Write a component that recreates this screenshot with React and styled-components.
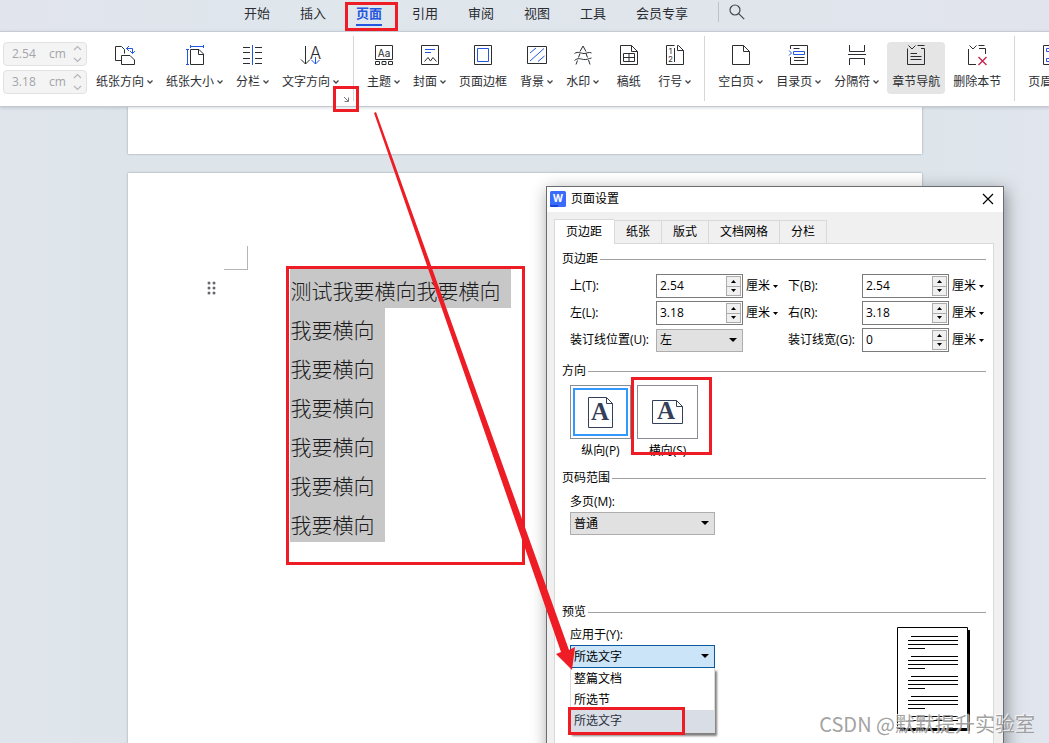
import React from "react";
import styled, { createGlobalStyle, css } from "styled-components";

const INK = "#2b2d31";
const BLUE = "#2457e0";
const RED = "#ee1c24";

const GlobalStyle = createGlobalStyle`
  *, *::before, *::after { box-sizing: border-box; }
  html, body, #root { height: 100%; }
  body {
    margin: 0;
    font-family: "Open Sans", "Noto Sans CJK SC", sans-serif;
    font-size: 12px;
    line-height: 16px;
    color: #111;
  }
  button, input, select { font: inherit; color: inherit; margin: 0; padding: 0; }
  button { border: 0; background: none; white-space: nowrap; }
  svg { display: block; flex: none; }
`;

const Screen = styled.div`
  position: relative;
  height: 100%;
  overflow: hidden;
  display: flex;
  flex-direction: column;
  background: linear-gradient(90deg, #e0e5ec, #dde5ea 12%, #dde5ea 88%, #e1e5ee);
`;

/* Red rectangle drawn round the part that contains it */
const Mark = styled.span`
  position: absolute;
  inset: ${(p) => p.$inset};
  border: 3px solid ${RED};
  pointer-events: none;
  z-index: 2;
`;

/* ---------- menu tabs ---------- */

const MenuBar = styled.nav`
  display: flex;
  align-items: stretch;
  gap: 30px;
  height: 31px;
  flex: none;
  padding-left: 244px;
  background: linear-gradient(90deg, #e1e4ed, #dfe6ec 30%, #e0e5ec 70%, #e1e4ed);
`;

const MenuTab = styled.button`
  position: relative;
  height: 26px;
  font-size: 13px;
  line-height: 26px;
  color: ${INK};
  ${(p) =>
    p.$active &&
    css`
      color: ${BLUE};
      font-weight: 700;
      border-bottom: 2px solid ${BLUE};
    `}
`;

const SearchBox = styled.button`
  display: flex;
  align-items: center;
  height: 20px;
  margin-top: 2px;
  padding-left: 10px;
  border-left: 1px solid #bcc2cb;
`;

/* ---------- ribbon ---------- */

const Ribbon = styled.div`
  display: flex;
  flex: none;
  height: 76px;
  position: relative;
  z-index: 1;
  background: #fff;
  border-top: 1px solid #c6ccd5;
  border-bottom: 1px solid #c4c8cf;
  box-shadow: 0 1px 3px rgba(60, 70, 90, 0.2);
`;

const Group = styled.div`
  position: relative;
  flex: none;
  display: flex;
  gap: 3px;
  padding: 10px 8px 0;
  &:first-child { padding: 10px 9px 0 3px; }
  &:not(:last-child)::after {
    content: "";
    position: absolute;
    right: -1px;
    top: 4px;
    bottom: 5px;
    width: 1px;
    background: #d5d6d9;
  }
  & + & { margin-left: 1px; }
`;

const MarginStack = styled.div`
  display: flex;
  flex-direction: column;
  gap: 4px;
  margin-right: 1px;
`;

const MarginBox = styled.label`
  display: flex;
  align-items: center;
  width: 84px;
  height: 24px;
  padding: 0 4px 0 8px;
  border: 1px solid #e2e2e2;
  border-radius: 4px;
  background: #f4f4f4;
  color: #a3a5a9;
  input {
    width: 37px;
    border: 0;
    background: none;
    outline: 0;
  }
  span { flex: 1; }
`;

const Tool = styled.button`
  display: flex;
  flex-direction: column;
  align-items: center;
  height: 52px;
  min-width: 43px;
  padding: 2px 5px 0;
  gap: 8px;
  border-radius: 4px;
  color: ${INK};
  background: ${(p) => (p.$on ? "#e5e5e5" : "transparent")};
`;

const ToolLabel = styled.span`
  display: flex;
  align-items: center;
  gap: 3px;
`;

const Launcher = styled.button`
  position: absolute;
  right: 2px;
  bottom: 2px;
  width: 10px;
  height: 10px;
`;

/* ---------- document ---------- */

const Workspace = styled.main`
  flex: 1;
  min-height: 0;
  display: flex;
  flex-direction: column;
  align-items: center;
  gap: 19px;
`;

const Paper = styled.section`
  width: 794px;
  max-width: 100%;
  flex: none;
  background: #fff;
  box-shadow: 0 0 2px rgba(70, 80, 100, 0.5);
`;

const PaperEnd = styled(Paper)`
  height: 47px;
`;

const PaperBody = styled(Paper)`
  display: flex;
  align-items: flex-start;
  min-height: 1123px;
  padding: 73px 96px 96px;
`;

const Gutter = styled.div`
  width: 66px;
  display: flex;
  flex-direction: column;
  gap: 10px;
`;

const CropCorner = styled.div`
  width: 24px;
  height: 24px;
  border-right: 1px solid #b5b5b5;
  border-bottom: 1px solid #b5b5b5;
`;

const Handle = styled.button`
  width: 10px;
  margin-left: -17px;
`;

const Lines = styled.div`
  position: relative;
  display: flex;
  flex-direction: column;
  align-items: flex-start;
  margin-top: 23px;
`;

const Line = styled.p`
  margin: 0;
  padding: 6px 10px 2px 1px;
  background: #c7c7c7;
  color: #1c1c1c;
  font-family: "Noto Sans CJK SC", sans-serif;
  font-size: 21px;
  font-weight: 300;
  line-height: 31px;
`;

/* ---------- dialog ---------- */

const Dialog = styled.div`
  position: absolute;
  z-index: 3;
  left: 546px;
  top: 186px;
  width: 458px;
  padding-bottom: 48px;
  background: #f0f0f0;
  border: 1px solid #6a6c6f;
  box-shadow: 2px 4px 16px rgba(0, 0, 0, 0.4);
  color: #000;
`;

const TitleBar = styled.header`
  display: flex;
  align-items: center;
  gap: 5px;
  height: 25px;
  padding: 0 9px 2px 3px;
  background: #fff;
  h1 {
    flex: 1;
    margin: 0;
    font-size: 12px;
    font-weight: 400;
  }
`;

const DialogTabs = styled.div`
  display: flex;
  align-items: flex-end;
  padding: 7px 7px 0;
`;

const DialogTab = styled.button`
  height: 23px;
  padding: 0 11px;
  border: 1px solid #d9d9d9;
  border-width: 1px 0 0 1px;
  background: #f0f0f0;
  &:last-child { border-right-width: 1px; }
  ${(p) =>
    p.$active &&
    css`
      position: relative;
      height: 25px;
      margin-bottom: -1px;
      padding: 0 12px 1px 11px;
      background: #fff;
    `}
`;

const Panel = styled.div`
  display: flex;
  flex-direction: column;
  margin: 0 9px 0 7px;
  padding: 7px 7px 9px;
  border: 1px solid #d9d9d9;
  background: #fff;
`;

const Section = styled.section`
  height: ${(p) => p.$height}px;
`;

const SectionTitle = styled.h2`
  display: flex;
  align-items: center;
  gap: 2px;
  margin: 0;
  font-size: 12px;
  font-weight: 400;
  &::after {
    content: "";
    flex: 1;
    height: 1px;
    background: #a0a0a0;
  }
`;

const MarginGrid = styled.div`
  display: grid;
  grid-template-columns: 86px 87px 45px 74px 87px 1fr;
  grid-auto-rows: 24px;
  gap: 3px 0;
  align-items: center;
  padding: 7px 0 0 8px;
  white-space: nowrap;
`;

const Spin = styled.span`
  display: flex;
  height: 24px;
  padding: 1px 1px 1px 3px;
  border: 1px solid #7a7a7a;
  background: #fff;
  input {
    flex: 1;
    min-width: 0;
    border: 0;
    outline: 0;
  }
`;

const SpinButtons = styled.span`
  display: flex;
  flex-direction: column;
  width: 15px;
  button {
    flex: 1;
    display: flex;
    align-items: center;
    justify-content: center;
    border: 1px solid #acacac;
    background: #f0f0f0;
  }
  button + button { border-top: 0; }
`;

const Unit = styled.button`
  display: flex;
  align-items: center;
  gap: 3px;
  padding-left: 3px;
`;

const Picker = styled.span`
  position: relative;
  display: block;
  width: ${(p) => p.$width}px;
  select {
    display: block;
    width: 100%;
    height: 23px;
    padding: 0 20px 0 3px;
    appearance: none;
    border: 1px solid ${(p) => (p.$open ? "#0a5aa0" : "#adadad")};
    border-radius: 0;
    background: ${(p) => (p.$open ? "#cce4f7" : "#e1e1e1")};
    outline: 0;
  }
  > svg {
    position: absolute;
    right: 6px;
    top: 9px;
    pointer-events: none;
  }
`;

const Orientations = styled.div`
  display: flex;
  gap: 6px;
  padding: 6px 0 0 8px;
`;

const Orientation = styled.label`
  position: relative;
  display: flex;
  flex-direction: column;
  align-items: center;
  gap: 4px;
  width: 61px;
  input {
    position: absolute;
    opacity: 0;
    margin: 0;
  }
`;

const OrientationFrame = styled.span`
  display: flex;
  width: 100%;
  height: 54px;
  padding: 2px;
  border: 1px solid #8a8d92;
  > span {
    flex: 1;
    display: flex;
    align-items: center;
    justify-content: center;
    border: 2px solid ${(p) => (p.$selected ? "#3399ff" : "transparent")};
  }
`;

const Field = styled.div`
  position: relative;
  padding: ${(p) => p.$top}px 0 0 8px;
  label { display: block; margin-bottom: 2px; }
`;

const Preview = styled.div`
  display: flex;
  justify-content: space-between;
  padding-right: 16px;
`;

const PreviewSheet = styled.div`
  margin-top: 7px;
`;

const Options = styled.ul`
  position: absolute;
  z-index: 1;
  top: 100%;
  left: 8px;
  width: 145px;
  margin: 0;
  padding: 0;
  list-style: none;
  background: #fff;
  border: 1px solid #dcdcdc;
  border-top: 0;
  box-shadow: 2px 3px 2px rgba(0, 0, 0, 0.5);
`;

const Option = styled.li`
  position: relative;
  height: ${(p) => (p.$hot ? 22 : 21)}px;
  padding-left: 3px;
  line-height: 21px;
  background: ${(p) => (p.$hot ? "#d9dee6" : "#fff")};
  color: ${(p) => (p.$hot ? "#2c3140" : "#000")};
`;

/* ---------- overlays ---------- */

const Pointer = styled.svg`
  position: absolute;
  z-index: 4;
  left: 374px;
  top: 112px;
  pointer-events: none;
`;

const Watermark = styled.div`
  position: absolute;
  z-index: 5;
  right: 14px;
  bottom: 6px;
  font-family: "Noto Sans CJK SC", sans-serif;
  font-size: 20px;
  font-weight: 400;
  line-height: 26px;
  white-space: nowrap;
  color: rgba(150, 150, 150, 0.9);
  text-shadow: -1px -1px 0 rgba(255, 255, 255, 0.7);
  pointer-events: none;
`;

/* ---------- drawings ---------- */

const Down = () => (
  <svg width="6" height="4" viewBox="0 0 6 4" fill="none" stroke="#44464a" strokeWidth="1.3">
    <path d="M.5.5 3 3 5.5.5" />
  </svg>
);

const Tri = ({ up, size = 5 }) => (
  <svg width={size} height={size === 5 ? 3 : 4} viewBox="0 0 10 6" preserveAspectRatio="none">
    <path d={up ? "M0 6 5 0l5 6z" : "M0 0h10L5 6z"} fill="#000" />
  </svg>
);

const UpDown = () => (
  <svg width="9" height="18" viewBox="0 0 9 18" fill="none" stroke="#b4b6b9" strokeWidth="1.2">
    <path d="M1 5 4.500 1.500 8 5M1 13l3.500 3.500L8 13" />
  </svg>
);

const fold = "M2.500 1.500H13.500L19.500 7.500V20.500H2.500ZM13.500 1.500V7.500H19.500";

const art = {
  orientation: (
    <>
      <path d="M7 16.500H1.500V2.500H7.500L10.500 5.500V9.500M7.500 11.500H16L20.500 16V20.500H7.500Z" />
      <path stroke={BLUE} d="M12.500 4.500H18.500V9.500M15 2 12.500 4.500 15 7M16 7l2.500 2.500L21 7" />
    </>
  ),
  size: (
    <>
      <path d="M6.500 5.500H15L19.500 10V20.500H6.500ZM14.500 5.500V10.500H19.500" />
      <path stroke={BLUE} d="M6.500 2.500H19.500M6.500 1v3M19.500 1v3M3.500 5.500V20.500M2 5.500h3M2 20.500h3" />
    </>
  ),
  columns: (
    <>
      <path d="M1 3.500h7M1 8.500h7M1 14.500h7M1 19.500h7M13 3.500h7M13 8.500h7M13 14.500h7M13 19.500h7" />
      <path stroke={BLUE} d="M10.500 1v20" />
    </>
  ),
  direction: (
    <>
      <path d="M5.500 2V20M1 15.500l4.500 4.500L10 15.500" />
      <text x="15.500" y="15" textAnchor="middle" fontSize="17" fill={INK} stroke="none" fontFamily="Inter, sans-serif" fontWeight="300">A</text>
      <path stroke={BLUE} d="M15.500 13v7M11.500 16l4 4 4-4" />
    </>
  ),
  theme: (
    <>
      <path d="M2.500 15.500V1.500H19.500V15.500ZM2.500 17.500h4v3h-4zM9 17.500h4v3H9zM15.500 17.500h4v3h-4z" />
      <text x="11" y="12.500" textAnchor="middle" fontSize="10" fill={INK} stroke="none" fontFamily="Inter, sans-serif">Aa</text>
    </>
  ),
  cover: (
    <>
      <path d="M2.500 1.500H19.500V20.500H2.500ZM5.500 17.500 9 13.500 11.500 17 14 13.500 17.500 17.500" />
      <path stroke={BLUE} d="M6 5.500h10M6 8.500h6" />
    </>
  ),
  border: (
    <>
      <path d="M2.500 1.500H19.500V20.500H2.500Z" />
      <path stroke={BLUE} d="M5.500 4.500h11v13h-11z" />
    </>
  ),
  background: (
    <>
      <path d="M1.500 2.500H20.500V19.500H1.500Z" />
      <path stroke={BLUE} d="M4 9 10 4M4 17 18 4.500M12 17.500 18.500 12" />
    </>
  ),
  watermark: (
    <path d="M8 7.500 11 2l3 5.500M2.500 9.500C6 7 9 9.500 12 9.500s5-2 7.500-.5M8 9.500 6.500 13.500M14 9.500l1.500 4M2.500 16.500c3.500-3 6-1.500 9-1s5.500-1 8-1.500M5.500 16.500 4 20.500M16.500 16l1.500 4.500" />
  ),
  grid: (
    <>
      <path d={fold} />
      <path d="M5.500 9.500h11v8h-11zM5.500 13.500h11M11 9.500v8" />
    </>
  ),
  numbers: (
    <>
      <path d="M10.500 1.500H2.500V20.500H19.500V6.500L14.500 1.500H13.500V6.500H19.500M10.500 4V18" />
      <text x="6.500" y="9.500" textAnchor="middle" fontSize="8" fill={INK} stroke="none" fontFamily="Inter, sans-serif">1</text>
      <text x="6.500" y="18" textAnchor="middle" fontSize="8" fill={INK} stroke="none" fontFamily="Inter, sans-serif">2</text>
    </>
  ),
  blank: <path d={fold} />,
  toc: (
    <>
      <path d="M2.500 5V1.500H19.500V20.500H2.500V13M5.500 4.500h6M6 13.500h10.500M6 16.500h10.500" />
      <path stroke={BLUE} d="M5.500 7.500h11v3h-11zM1 6.500l2.500 2.500L1 11.500" />
    </>
  ),
  breaks: <path d="M3.500 1v6.500h15V1M2 10.500h18M3.500 21v-6.500h15V21" />,
  nav: <path d="M2.500 4.500V20.500H19.500V4.500H16M12.500 1.500H19.500M3.500 1.500 7 5l3.500-3.500M5.500 9.500H12M5.500 12.500h11M5.500 15.500h11" />,
  remove: (
    <>
      <path d="M2.500 5V20.500H10M12.500 1.500H18.500M13 4.500h6.500V10M3.500 1.500 7 5l3.500-3.500" />
      <path stroke="#c9254b" strokeWidth="1.400" d="m12.500 13 8 8M20.500 13l-8 8" />
    </>
  ),
  header: (
    <>
      <path d="M2.500 1.500H19.500V20.500H2.500Z" />
      <path stroke={BLUE} d="M5.500 4.500h11v3h-11zM5.500 14.500h11v3h-11z" />
    </>
  ),
};

const ToolIcon = ({ name }) => (
  <svg width="22" height="22" viewBox="0 0 22 22" fill="none" stroke={INK} strokeWidth="1">
    {art[name]}
  </svg>
);

const SheetIcon = ({ wide }) => {
  const w = wide ? 30 : 24;
  const h = wide ? 23 : 30;
  return (
    <svg
      width={w + 1}
      height={h + 1}
      viewBox={`0 0 ${w + 1} ${h + 1}`}
      overflow="visible"
      fill="none"
      stroke="#34405a"
    >
      <path d={`M.5.5H${w - 5.5}L${w + 0.5} 6.500V${h + 0.5}H.5ZM${w - 5.5}.5V6.500H${w + 0.5}`} />
      <text
        x={wide ? 14 : 12}
        y={wide ? 19 : 23}
        textAnchor="middle"
        fontSize="25"
        fontWeight="700"
        fontFamily="Liberation Serif, serif"
        fill="#34405a"
        stroke="none"
      >
        A
      </text>
    </svg>
  );
};

const paragraph = (y) =>
  `M14 ${y}h47M11 ${y + 4}h50M11 ${y + 8}h50M11 ${y + 12}h17`;

const SheetPreview = () => (
  <svg width="73" height="104" viewBox="0 0 73 104" stroke="#000" fill="none">
    <path d="M3 3h70v101H3z" fill="#000" stroke="none" />
    <path d="M.5.5h70v101H.5z" fill="#fff" />
    <path d={[9.5, 29.5, 49.5, 69.5].map(paragraph).join("")} />
    <path d="M14 89.500h47M11 93.500h50" />
  </svg>
);

/* ---------- parts ---------- */

const ToolButton = ({ icon, label, menu, on }) => (
  <Tool type="button" $on={on}>
    <ToolIcon name={icon} />
    <ToolLabel>
      {label}
      {menu && <Down />}
    </ToolLabel>
  </Tool>
);

const SpinBox = ({ id, value }) => (
  <Spin>
    <input id={id} type="text" defaultValue={value} />
    <SpinButtons>
      <button type="button" aria-label="增加"><Tri up /></button>
      <button type="button" aria-label="减少"><Tri /></button>
    </SpinButtons>
  </Spin>
);

const Measure = ({ id, label, value }) => (
  <>
    <label htmlFor={id}>{label}</label>
    <SpinBox id={id} value={value} />
    <Unit type="button">厘米<Tri /></Unit>
  </>
);

const menuTabs = ["开始", "插入", "页面", "引用", "审阅", "视图", "工具", "会员专享"];

const pageTools = [
  { icon: "theme", label: "主题", menu: true },
  { icon: "cover", label: "封面", menu: true },
  { icon: "border", label: "页面边框" },
  { icon: "background", label: "背景", menu: true },
  { icon: "watermark", label: "水印", menu: true },
  { icon: "grid", label: "稿纸" },
  { icon: "numbers", label: "行号", menu: true },
];

const sectionTools = [
  { icon: "blank", label: "空白页", menu: true },
  { icon: "toc", label: "目录页", menu: true },
  { icon: "breaks", label: "分隔符", menu: true },
  { icon: "nav", label: "章节导航", on: true },
  { icon: "remove", label: "删除本节" },
];

const lines = ["测试我要横向我要横向", ...Array(6).fill("我要横向")];

function PageSetup() {
  return (
    <Dialog role="dialog" aria-label="页面设置">
      <TitleBar>
        <svg width="16" height="16" viewBox="0 0 16 16">
          <rect width="16" height="16" rx="1.500" fill="#3a6bff" />
          <path d="M0 14h8v2H1.500A1.500 1.500 0 0 1 0 14.500z" fill="#1746d8" />
          <text x="8" y="11" textAnchor="middle" fontSize="10" fontWeight="700" fontFamily="Inter, sans-serif" fill="#fff">W</text>
        </svg>
        <h1>页面设置</h1>
        <button type="button" aria-label="关闭">
          <svg width="12" height="12" viewBox="0 0 12 12" stroke="#000" strokeWidth="1.200">
            <path d="m1 1 10 10M11 1 1 11" />
          </svg>
        </button>
      </TitleBar>
      <DialogTabs role="tablist">
        {["页边距", "纸张", "版式", "文档网格", "分栏"].map((t, i) => (
          <DialogTab key={t} type="button" role="tab" $active={i === 0}>{t}</DialogTab>
        ))}
      </DialogTabs>
      <Panel>
        <Section $height={112}>
          <SectionTitle>页边距</SectionTitle>
          <MarginGrid>
            <Measure id="top" label="上(T):" value="2.54" />
            <Measure id="bottom" label="下(B):" value="2.54" />
            <Measure id="left" label="左(L):" value="3.18" />
            <Measure id="right" label="右(R):" value="3.18" />
            <label htmlFor="gutterSide">装订线位置(U):</label>
            <Picker $width={87}>
              <select id="gutterSide"><option>左</option></select>
              <Tri size={8} />
            </Picker>
            <span />
            <Measure id="gutter" label="装订线宽(G):" value="0" />
          </MarginGrid>
        </Section>
        <Section $height={107}>
          <SectionTitle>方向</SectionTitle>
          <Orientations>
            <Orientation>
              <input type="radio" name="orientation" defaultChecked />
              <OrientationFrame $selected><span><SheetIcon /></span></OrientationFrame>
              纵向(P)
            </Orientation>
            <Orientation>
              <input type="radio" name="orientation" />
              <OrientationFrame><span><SheetIcon wide /></span></OrientationFrame>
              横向(S)
              <Mark $inset="-8px -14px 4px -6px" />
            </Orientation>
          </Orientations>
        </Section>
        <Section $height={134}>
          <SectionTitle>页码范围</SectionTitle>
          <Field $top={8}>
            <label htmlFor="multi">多页(M):</label>
            <Picker $width={145}>
              <select id="multi"><option>普通</option></select>
              <Tri size={8} />
            </Picker>
          </Field>
        </Section>
        <Section $height={131}>
          <SectionTitle>预览</SectionTitle>
          <Preview>
            <div>
              <Field $top={7}>
                <label htmlFor="apply">应用于(Y):</label>
                <Picker $width={145} $open>
                  <select id="apply"><option>所选文字</option></select>
                  <Tri size={8} />
                </Picker>
                <Options role="listbox" aria-label="应用于">
                  <Option role="option">整篇文档</Option>
                  <Option role="option">所选节</Option>
                  <Option role="option" $hot>
                    所选文字
                    <Mark $inset="-3px 29px -3px -3px" />
                  </Option>
                </Options>
              </Field>
            </div>
            <PreviewSheet><SheetPreview /></PreviewSheet>
          </Preview>
        </Section>
      </Panel>
    </Dialog>
  );
}

export default function App() {
  return (
    <Screen>
      <GlobalStyle />
      <MenuBar>
        {menuTabs.map((t) => (
          <MenuTab key={t} type="button" $active={t === "页面"}>
            {t}
            {t === "页面" && <Mark $inset="2px -16px -7px -11px" />}
          </MenuTab>
        ))}
        <SearchBox type="button" aria-label="搜索">
          <svg width="16" height="16" viewBox="0 0 16 16" fill="none" stroke="#44474d" strokeWidth="1.200">
            <circle cx="6" cy="6" r="5" />
            <path d="m9.700 9.700 5.500 5.500" />
          </svg>
        </SearchBox>
      </MenuBar>

      <Ribbon>
        <Group>
          <MarginStack>
            {["2.54", "3.18"].map((v) => (
              <MarginBox key={v}>
                <input type="text" defaultValue={v} disabled />
                <span>cm</span>
                <UpDown />
              </MarginBox>
            ))}
          </MarginStack>
          <ToolButton icon="orientation" label="纸张方向" menu />
          <ToolButton icon="size" label="纸张大小" menu />
          <ToolButton icon="columns" label="分栏" menu />
          <ToolButton icon="direction" label="文字方向" menu />
          <Launcher type="button" aria-label="页面设置">
            <svg width="10" height="10" viewBox="0 0 10 10" fill="none" stroke="#77797e">
              <path d="m3 3 4 4M7.500 3.500V7.500H3.500" />
            </svg>
            <Mark $inset="-8px -8px -8px -8px" />
          </Launcher>
        </Group>
        <Group>
          {pageTools.map((t) => <ToolButton key={t.label} {...t} />)}
        </Group>
        <Group>
          {sectionTools.map((t) => <ToolButton key={t.label} {...t} />)}
        </Group>
        <Group>
          <ToolButton icon="header" label="页眉页脚" />
        </Group>
      </Ribbon>

      <Workspace>
        <PaperEnd />
        <PaperBody>
          <Gutter>
            <CropCorner />
            <Handle type="button" aria-label="段落">
              <svg width="10" height="16" viewBox="0 0 10 16" fill="#66686c">
                {[3, 8, 13].map((y) => (
                  <g key={y}>
                    <circle cx="2" cy={y} r="1.500" />
                    <circle cx="7" cy={y} r="1.500" />
                  </g>
                ))}
              </svg>
            </Handle>
          </Gutter>
          <Lines>
            {lines.map((t, i) => <Line key={i}>{t}</Line>)}
            <Mark $inset="-3px -14px -23px -4px" />
          </Lines>
        </PaperBody>
      </Workspace>

      <PageSetup />

      <Pointer width="202" height="560" viewBox="0 0 202 560">
        <path d="M0 1 2 0 195 538 201 535 198 558 182 542 187 540Z" fill={RED} />
      </Pointer>
      <Watermark>CSDN @默默提升实验室</Watermark>
    </Screen>
  );
}
